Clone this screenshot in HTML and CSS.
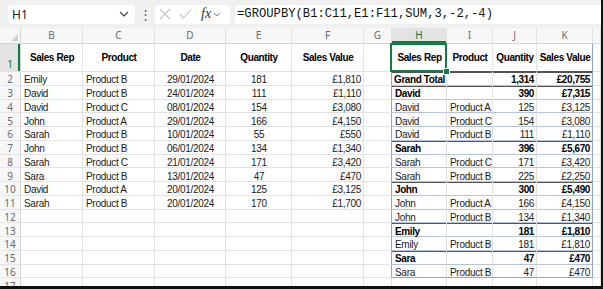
FILE: index.html
```html
<!DOCTYPE html>
<html lang="en">
<head>
  <meta charset="UTF-8">
  <meta name="viewport" content="width=device-width, initial-scale=1.0">
  <title>GROUPBY sheet</title>
  <link rel="stylesheet" href="styles.css">
</head>
<body>
  <div class="window">
    <!-- formula bar -->
    <div class="formula-bar">
      <div class="name-box">
        <span>H1</span>
        <svg class="chev" width="10" height="6" viewBox="0 0 10 6"><path d="M1 1l4 4 4-4" fill="none" stroke="#444" stroke-width="1.2"/></svg>
      </div>
      <div class="dots">&#8942;</div>
      <div class="fx-box">
        <svg width="12" height="12" viewBox="0 0 12 12"><path d="M1 1l10 10M11 1L1 11" stroke="#c4c4c4" stroke-width="1.1"/></svg>
        <svg width="13" height="12" viewBox="0 0 13 12"><path d="M1 6.5l3.5 3.5L12 1.5" fill="none" stroke="#c4c4c4" stroke-width="1.1"/></svg>
        <span class="fx">fx</span>
        <svg width="8" height="5" viewBox="0 0 8 5"><path d="M1 1l3 3 3-3" fill="none" stroke="#777" stroke-width="1"/></svg>
      </div>
      <div class="formula">=GROUPBY(B1:C11,E1:F11,SUM,3,-2,-4)</div>
    </div>

    <!-- grid -->
    <div class="sheet">
      <div class="row col-heads">
        <div class="corner"><span class="tri"></span></div>
        <div class="ch">B</div><div class="ch">C</div><div class="ch">D</div><div class="ch">E</div>
        <div class="ch">F</div><div class="ch">G</div><div class="ch sel">H</div><div class="ch">I</div>
        <div class="ch">J</div><div class="ch">K</div><div class="ch"></div>
      </div>

      <div class="row r-head">
        <div class="rh sel">1</div>
        <div class="c b mid">Sales Rep</div><div class="c b mid">Product</div><div class="c b mid">Date</div>
        <div class="c b mid">Quantity</div><div class="c b mid">Sales Value</div><div class="c edge"></div>
        <div class="c b mid t active">Sales Rep</div><div class="c b mid t">Product</div>
        <div class="c b mid t">Quantity</div><div class="c b mid t tr">Sales Value</div><div class="c"></div>
      </div>

      <div class="row">
        <div class="rh">2</div>
        <div class="c">Emily</div><div class="c">Product B</div><div class="c mid">29/01/2024</div><div class="c mid">181</div><div class="c num">£1,810</div><div class="c edge"></div>
        <div class="c b t dark spill">Grand Total</div><div class="c t dark"></div><div class="c b num t dark">1,314</div><div class="c b num t tr dark">£20,755</div><div class="c"></div>
      </div>
      <div class="row">
        <div class="rh">3</div>
        <div class="c">David</div><div class="c">Product B</div><div class="c mid">24/01/2024</div><div class="c mid">111</div><div class="c num">£1,110</div><div class="c edge"></div>
        <div class="c b t dark">David</div><div class="c t dark"></div><div class="c b num t dark">390</div><div class="c b num t tr dark">£7,315</div><div class="c"></div>
      </div>
      <div class="row">
        <div class="rh">4</div>
        <div class="c">David</div><div class="c">Product C</div><div class="c mid">08/01/2024</div><div class="c mid">154</div><div class="c num">£3,080</div><div class="c edge"></div>
        <div class="c t">David</div><div class="c t">Product A</div><div class="c num t">125</div><div class="c num t tr">£3,125</div><div class="c"></div>
      </div>
      <div class="row">
        <div class="rh">5</div>
        <div class="c">John</div><div class="c">Product A</div><div class="c mid">29/01/2024</div><div class="c mid">166</div><div class="c num">£4,150</div><div class="c edge"></div>
        <div class="c t">David</div><div class="c t">Product C</div><div class="c num t">154</div><div class="c num t tr">£3,080</div><div class="c"></div>
      </div>
      <div class="row">
        <div class="rh">6</div>
        <div class="c">Sarah</div><div class="c">Product B</div><div class="c mid">10/01/2024</div><div class="c mid">55</div><div class="c num">£550</div><div class="c edge"></div>
        <div class="c t">David</div><div class="c t">Product B</div><div class="c num t">111</div><div class="c num t tr">£1,110</div><div class="c"></div>
      </div>
      <div class="row">
        <div class="rh">7</div>
        <div class="c">John</div><div class="c">Product B</div><div class="c mid">06/01/2024</div><div class="c mid">134</div><div class="c num">£1,340</div><div class="c edge"></div>
        <div class="c b t dark">Sarah</div><div class="c t dark"></div><div class="c b num t dark">396</div><div class="c b num t tr dark">£5,670</div><div class="c"></div>
      </div>
      <div class="row">
        <div class="rh">8</div>
        <div class="c">Sarah</div><div class="c">Product C</div><div class="c mid">21/01/2024</div><div class="c mid">171</div><div class="c num">£3,420</div><div class="c edge"></div>
        <div class="c t">Sarah</div><div class="c t">Product C</div><div class="c num t">171</div><div class="c num t tr">£3,420</div><div class="c"></div>
      </div>
      <div class="row">
        <div class="rh">9</div>
        <div class="c">Sara</div><div class="c">Product B</div><div class="c mid">13/01/2024</div><div class="c mid">47</div><div class="c num">£470</div><div class="c edge"></div>
        <div class="c t">Sarah</div><div class="c t">Product B</div><div class="c num t">225</div><div class="c num t tr">£2,250</div><div class="c"></div>
      </div>
      <div class="row">
        <div class="rh">10</div>
        <div class="c">David</div><div class="c">Product A</div><div class="c mid">20/01/2024</div><div class="c mid">125</div><div class="c num">£3,125</div><div class="c edge"></div>
        <div class="c b t dark">John</div><div class="c t dark"></div><div class="c b num t dark">300</div><div class="c b num t tr dark">£5,490</div><div class="c"></div>
      </div>
      <div class="row">
        <div class="rh">11</div>
        <div class="c">Sarah</div><div class="c">Product B</div><div class="c mid">20/01/2024</div><div class="c mid">170</div><div class="c num">£1,700</div><div class="c edge"></div>
        <div class="c t">John</div><div class="c t">Product A</div><div class="c num t">166</div><div class="c num t tr">£4,150</div><div class="c"></div>
      </div>
      <div class="row">
        <div class="rh">12</div>
        <div class="c"></div><div class="c"></div><div class="c"></div><div class="c"></div><div class="c"></div><div class="c edge"></div>
        <div class="c t">John</div><div class="c t">Product B</div><div class="c num t">134</div><div class="c num t tr">£1,340</div><div class="c"></div>
      </div>
      <div class="row">
        <div class="rh">13</div>
        <div class="c"></div><div class="c"></div><div class="c"></div><div class="c"></div><div class="c"></div><div class="c edge"></div>
        <div class="c b t dark">Emily</div><div class="c t dark"></div><div class="c b num t dark">181</div><div class="c b num t tr dark">£1,810</div><div class="c"></div>
      </div>
      <div class="row">
        <div class="rh">14</div>
        <div class="c"></div><div class="c"></div><div class="c"></div><div class="c"></div><div class="c"></div><div class="c edge"></div>
        <div class="c t">Emily</div><div class="c t">Product B</div><div class="c num t">181</div><div class="c num t tr">£1,810</div><div class="c"></div>
      </div>
      <div class="row">
        <div class="rh">15</div>
        <div class="c"></div><div class="c"></div><div class="c"></div><div class="c"></div><div class="c"></div><div class="c edge"></div>
        <div class="c b t dark">Sara</div><div class="c t dark"></div><div class="c b num t dark">47</div><div class="c b num t tr dark">£470</div><div class="c"></div>
      </div>
      <div class="row">
        <div class="rh">16</div>
        <div class="c"></div><div class="c"></div><div class="c"></div><div class="c"></div><div class="c"></div><div class="c edge"></div>
        <div class="c t last">Sara</div><div class="c t last">Product B</div><div class="c num t last">47</div><div class="c num t tr last">£470</div><div class="c"></div>
      </div>
      <div class="row">
        <div class="rh">17</div>
        <div class="c"></div><div class="c"></div><div class="c"></div><div class="c"></div><div class="c"></div><div class="c"></div>
        <div class="c"></div><div class="c"></div><div class="c"></div><div class="c"></div><div class="c"></div>
      </div>
    </div>
  </div>
</body>
</html>
```

FILE: styles.css
```css
body {
  margin: 0;
  background: #fff;
}
.window {
  width: 603px;
  height: 289px;
  box-sizing: border-box;
  border-right: 2px solid #111;
  border-bottom: 3px solid #111;
  overflow: hidden;
  background: #fff;
}

/* formula bar */
.formula-bar {
  height: 28px;
  background: #f0f0f0;
  display: flex;
  align-items: center;
  padding: 0 0 0 8px;
  font-family: "Noto Sans", sans-serif;
}
.name-box {
  width: 127px;
  height: 19px;
  box-sizing: border-box;
  background: #fff;
  border-radius: 4px;
  display: flex;
  align-items: center;
  justify-content: space-between;
  padding: 0 6px 0 4px;
  font-size: 12px;
  color: #222;
}
.dots {
  width: 20px;
  text-align: center;
  color: #666;
  font-size: 13px;
}
.fx-box {
  width: 75px;
  height: 19px;
  box-sizing: border-box;
  background: #fff;
  border-radius: 4px;
  display: flex;
  align-items: center;
  gap: 8px;
  padding: 0 0 0 4px;
}
.fx {
  font-family: "Liberation Serif", serif;
  font-style: italic;
  font-size: 14px;
  color: #333;
  margin-left: 1px;
  margin-right: -6px;
}
.formula {
  flex: 1;
  height: 19px;
  margin-left: 5px;
  box-sizing: border-box;
  background: #fff;
  border-radius: 4px 0 0 4px;
  padding: 0 0 0 2px;
  font-family: "Liberation Mono", monospace;
  font-size: 12.2px;
  line-height: 19px;
  color: #111;
}

/* sheet */
.sheet {
  font-family: "Liberation Sans", Arial, sans-serif;
  font-size: 10px;
  letter-spacing: -0.3px;
  color: #1a1a1a;
}
.row {
  display: grid;
  grid-template-columns: 21px 62px 72px 71px 66px 72px 28px 55px 46px 44px 56px 1fr;
  height: 13.75px;
}
.col-heads {
  height: 16px;
  background: #f7f7f7;
  border-bottom: 1px solid #d4d4d4;
  box-sizing: border-box;
  letter-spacing: 0;
}
.r-head {
  height: 28px;
}
.corner {
  position: relative;
  border-right: 1px solid #d4d4d4;
}
.tri {
  position: absolute;
  right: 2px;
  bottom: 2px;
  border-left: 7px solid transparent;
  border-bottom: 7px solid #cfcfcf;
}
.ch {
  font-family: "Noto Sans", sans-serif;
  font-size: 10px;
  color: #6a6a6a;
  text-align: center;
  line-height: 15px;
  border-right: 1px solid #e2e2e2;
}
.ch.sel {
  background: #e3e3e3;
  color: #107c41;
  box-shadow: inset 0 -2px 0 #107c41;
}
.rh {
  background: #f7f7f7;
  border-right: 1px solid #d4d4d4;
  border-bottom: 1px solid #e6e6e6;
  box-sizing: border-box;
  font-family: "Noto Sans", sans-serif;
  font-size: 10px;
  letter-spacing: 0;
  color: #6a6a6a;
  display: flex;
  align-items: flex-end;
  justify-content: center;
  line-height: 9.5px;
}
.rh.sel {
  background: #e3e3e3;
  color: #107c41;
  box-shadow: inset -2px 0 0 #107c41;
  padding-bottom: 2px;
}
.c {
  border-right: 1px solid #e2e2e2;
  border-bottom: 1px solid #e2e2e2;
  box-sizing: border-box;
  padding: 0 2px 0 3px;
  white-space: nowrap;
  line-height: 9.5px;
  display: flex;
  align-items: flex-end;
}
.c.b {
  font-weight: bold;
  color: #000;
  letter-spacing: -0.4px;
}
.c.mid {
  justify-content: center;
}
.r-head .c {
  align-items: center;
  line-height: 13px;
}
.c.num {
  justify-content: flex-end;
}
.c.spill {
  position: relative;
  z-index: 1;
  padding-left: 2px;
}

/* GROUPBY output borders */
.c.edge {
  border-right-color: #8ea4cf;
}
.c.t {
  border-bottom-color: #b4c3de;
}
.c.tr {
  border-right-color: #8ea4cf;
}
.c.dark {
  box-shadow: inset 0 1px 0 #555;
}
.c.last {
  border-bottom-color: #8ea4cf;
}
.r-head .c.t {
  border-bottom-color: #555;
}
.c.active {
  position: relative;
}
.c.active::before {
  content: "";
  position: absolute;
  left: -2px;
  top: -1px;
  right: -1px;
  bottom: -1px;
  border: 2px solid #107c41;
}
.c.active::after {
  content: "";
  position: absolute;
  right: -4px;
  bottom: -4px;
  width: 5px;
  height: 5px;
  background: #107c41;
  border: 1px solid #fff;
  z-index: 2;
}
```
